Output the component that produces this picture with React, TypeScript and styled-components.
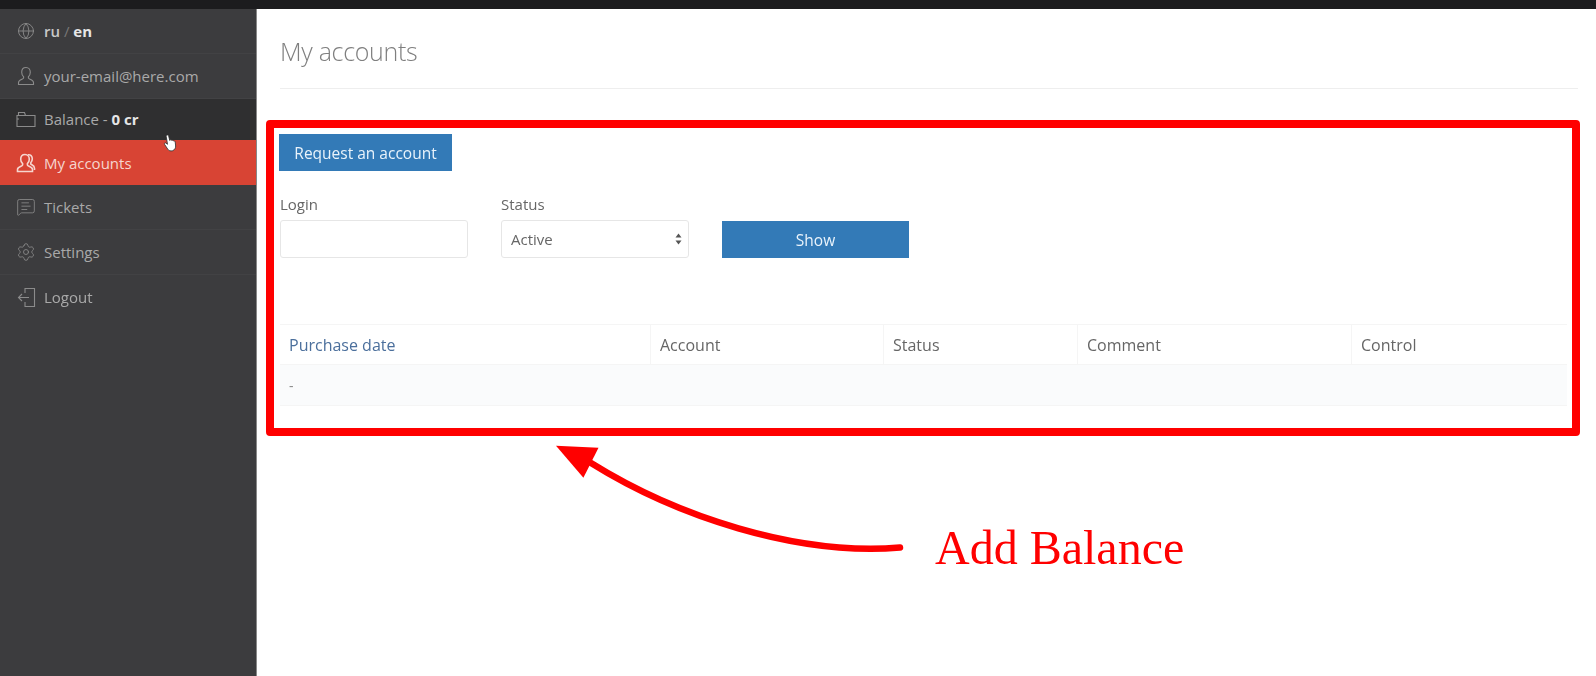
import React from "react";
import styled, { createGlobalStyle } from "styled-components";
import { Globe, MessageSquareText, Settings } from "lucide-react";

const GlobalStyle = createGlobalStyle`
  html, body { margin: 0; padding: 0; background: #fff; }
  body { font-family: "Open Sans", "Liberation Sans", sans-serif; }
`;

const Page = styled.div`
  position: relative;
  width: 1596px;
  height: 676px;
  overflow: hidden;
  background: #fff;
`;

const TopBar = styled.div`
  height: 9px;
  background: #1c1c1e;
`;

const Body = styled.div`
  display: flex;
  height: 667px;
  filter: blur(0.7px);
`;

const Sidebar = styled.nav`
  width: 257px;
  flex: none;
  background: #3c3c3e;
  border-right: 1px solid #888;
  box-sizing: border-box;
`;

const MenuRow = styled.div<{ $variant?: "dark" | "active" }>`
  display: flex;
  align-items: center;
  height: ${(p) => (p.$variant === "dark" ? 41 : 45)}px;
  padding-left: 16px;
  padding-top: ${(p) => (p.$variant === "active" ? 1 : 0)}px;
  box-sizing: border-box;
  font-size: 15px;
  color: ${(p) => (p.$variant === "active" ? "#f6d5cf" : "#a9a9a9")};
  background: ${(p) =>
    p.$variant === "active" ? "#d84434" : p.$variant === "dark" ? "#2f2f30" : "transparent"};
  border-bottom: 1px solid ${(p) => (p.$variant ? "transparent" : "#424244")};

  &:last-child {
    border-bottom-color: transparent;
  }

  b {
    color: #e6e6e6;
    font-weight: 700;
  }
`;

const MenuIcon = styled.span<{ $active?: boolean }>`
  display: flex;
  justify-content: center;
  width: 20px;
  margin-right: 8px;
  color: ${(p) => (p.$active ? "#f6d5cf" : "#8b8b8b")};
`;

const Lang = styled.span`
  color: #c8c8c8;
  font-weight: 600;
`;

const Slash = styled.span`
  color: #777;
  font-weight: 400;
`;

const Main = styled.main`
  flex: 1;
  min-width: 0;
  padding-left: 23px;
  padding-right: 18px;
`;

const Title = styled.h1`
  margin: 0;
  padding-top: 26px;
  height: 33px;
  line-height: 33px;
  font-size: 25px;
  font-weight: 300;
  letter-spacing: -0.3px;
  color: #7f7f7f;
`;

const Rule = styled.div`
  height: 1px;
  margin-top: 20px;
  background: #eee;
`;

const BlueButton = styled.div`
  display: flex;
  align-items: center;
  justify-content: center;
  background: #337ab7;
  color: #e9f3fb;
  font-size: 15.5px;
  box-sizing: border-box;
`;

const RequestButton = styled(BlueButton)`
  width: 173px;
  height: 37px;
  margin-top: 45px;
  margin-left: -1px;
`;

const Filters = styled.div`
  display: flex;
  align-items: flex-end;
  gap: 33px;
  margin-top: 24px;
`;

const Field = styled.div`
  display: flex;
  flex-direction: column;
  width: 188px;
`;

const FieldLabel = styled.label`
  font-size: 15px;
  line-height: 19px;
  color: #666;
  margin-bottom: 6px;
`;

const TextBox = styled.div`
  height: 38px;
  background: #fff;
  border: 1px solid #e6e6e6;
  border-radius: 3px;
  box-sizing: border-box;
`;

const SelectBox = styled(TextBox)`
  display: flex;
  align-items: center;
  justify-content: space-between;
  padding: 0 6px 0 9px;
  font-size: 15px;
  color: #666;
`;

const Spinner = styled.span`
  display: flex;
`;

const ShowButton = styled(BlueButton)`
  width: 187px;
  height: 37px;
`;

const Table = styled.div`
  margin-top: 66px;
  width: 1287px;
  border-top: 1px solid #f5f5f5;
`;

const HeadRow = styled.div`
  display: flex;
  height: 39px;
  border-bottom: 1px solid #f5f5f5;
`;

const HeadCell = styled.div<{ $width: number; $link?: boolean }>`
  display: flex;
  align-items: center;
  width: ${(p) => p.$width}px;
  padding-left: 9px;
  box-sizing: border-box;
  border-right: 1px solid #f5f5f5;
  font-size: 16px;
  font-weight: 500;
  color: ${(p) => (p.$link ? "#4b6f9c" : "#666")};

  &:last-child {
    border-right: none;
  }
`;

const DataRow = styled.div`
  display: flex;
  align-items: center;
  height: 40px;
  padding-left: 9px;
  background: #fafbfc;
  border-bottom: 1px solid #f5f5f5;
  font-size: 14px;
  color: #888;
`;

const Pointer = styled.svg`
  position: absolute;
  left: 163px;
  top: 134px;
  filter: blur(0.5px);
`;

const Callout = styled.div`
  position: absolute;
  left: 266px;
  top: 120px;
  width: 1314px;
  height: 316px;
  box-sizing: border-box;
  border: 8px solid #ff0000;
  border-radius: 4px;
`;

const Arrow = styled.svg`
  position: absolute;
  left: 546px;
  top: 434px;
`;

const CalloutText = styled.div`
  position: absolute;
  left: 935px;
  top: 520px;
  font-family: "Liberation Serif", serif;
  font-size: 48px;
  line-height: 56px;
  color: #ff0000;
`;

type MenuEntry = {
  icon: React.ReactNode;
  label: React.ReactNode;
  variant?: "dark" | "active";
};

const busts = "M9 1.500c-2.800 0-4.300 2.200-4.300 4.800 0 1.900.8 3.500 1.900 4.400v1.400c0 1-5.100 1.600-5.100 4.300v2.100h15v-2.100c0-2.700-5.100-3.300-5.100-4.300v-1.400c1.100-.9 1.900-2.500 1.900-4.400 0-2.600-1.500-4.800-4.300-4.800z";

const UserIcon = () => (
  <svg width="18" height="20" viewBox="0 0 18 20" fill="none" stroke="currentColor" strokeWidth="1.1">
    <path d={busts} />
  </svg>
);

const AccountsIcon = () => (
  <svg width="20" height="20" viewBox="0 0 20 20" fill="none" stroke="currentColor" strokeWidth="1.6">
    <path d={busts} />
    <path d="M12 1.800c2.500-.6 4.300 1.500 4.300 4 0 1.700-.6 3-1.500 3.900v1.300c.6.9 3.700 1.400 3.700 4.200V17" />
  </svg>
);

const FolderIcon = () => (
  <svg width="20" height="17" viewBox="0 0 20 17" fill="none" stroke="currentColor" strokeWidth="1.1">
    <path d="M1 15.500V4.500h18v11z" />
    <path d="M2.500 4.500V1.500h6l1 3M1 8h2" />
  </svg>
);

const LogoutIcon = () => (
  <svg width="19" height="21" viewBox="0 0 19 21" fill="none" stroke="currentColor" strokeWidth="1.1">
    <path d="M8 6V1.500h9.500v18H8V15" />
    <path d="M12 10.500H1.500M5 7l-3.500 3.500L5 14" />
  </svg>
);

const menu: MenuEntry[] = [
  {
    icon: <Globe size={18} strokeWidth={1.2} />,
    label: (
      <Lang>
        ru <Slash>/</Slash> <b>en</b>
      </Lang>
    ),
  },
  { icon: <UserIcon />, label: "your-email@here.com" },
  {
    icon: <FolderIcon />,
    label: (
      <>
        Balance - <b>0 cr</b>
      </>
    ),
    variant: "dark",
  },
  { icon: <AccountsIcon />, label: "My accounts", variant: "active" },
  { icon: <MessageSquareText size={20} strokeWidth={1} />, label: "Tickets" },
  { icon: <Settings size={20} strokeWidth={1} />, label: "Settings" },
  { icon: <LogoutIcon />, label: "Logout" },
];

const columns = [
  { title: "Purchase date", width: 371, link: true },
  { title: "Account", width: 233 },
  { title: "Status", width: 194 },
  { title: "Comment", width: 274 },
  { title: "Control", width: 215 },
];

const App = () => {
  return (
    <Page>
      <GlobalStyle />
      <TopBar />
      <Body>
        <Sidebar>
          {menu.map((m, i) => (
            <MenuRow key={i} $variant={m.variant}>
              <MenuIcon $active={m.variant === "active"}>{m.icon}</MenuIcon>
              <span>{m.label}</span>
            </MenuRow>
          ))}
        </Sidebar>
        <Main>
          <Title>My accounts</Title>
          <Rule />
          <RequestButton>Request an account</RequestButton>
          <Filters>
            <Field>
              <FieldLabel>Login</FieldLabel>
              <TextBox />
            </Field>
            <Field>
              <FieldLabel>Status</FieldLabel>
              <SelectBox>
                Active
                <Spinner>
                  <svg width="7" height="12" viewBox="0 0 7 12" fill="#555">
                    <path d="M3.500 0.500 6.500 4.500H0.500ZM3.500 11.500 0.500 7.500H6.500Z" />
                  </svg>
                </Spinner>
              </SelectBox>
            </Field>
            <ShowButton>Show</ShowButton>
          </Filters>
          <Table>
            <HeadRow>
              {columns.map((c) => (
                <HeadCell key={c.title} $width={c.width} $link={c.link}>
                  {c.title}
                </HeadCell>
              ))}
            </HeadRow>
            <DataRow>-</DataRow>
          </Table>
        </Main>
      </Body>

      <Pointer width="15" height="18" viewBox="0 0 17 21">
        <path
          d="M4 1.500c1-.8 2.200 0 2.400 1l1.200 5 .4-.6c1-.6 1.800 0 2 .6.800-.5 1.700-.2 2 .6.900-.3 1.800.3 2 1.300l.5 4.600c.1 2-1 4.600-3.500 5.500-2.400.6-4.700 0-5.700-1.800L1.500 12c-.5-1 .5-2 1.500-1.500l2 1.500L3.500 3c-.1-.6 0-1.100.5-1.500z"
          fill="#fff"
          stroke="#333"
          strokeWidth="1"
        />
      </Pointer>

      <Callout />
      <Arrow width="360" height="130" viewBox="0 0 360 130">
        <path d="M45 29C130 82 250 122 354 113.500" fill="none" stroke="#ff0000" strokeWidth="6.500" strokeLinecap="round" />
        <path d="M10 11.700 52.500 13.700 37.400 43.700Z" fill="#ff0000" />
      </Arrow>
      <CalloutText>Add Balance</CalloutText>
    </Page>
  );
};

export default App;
